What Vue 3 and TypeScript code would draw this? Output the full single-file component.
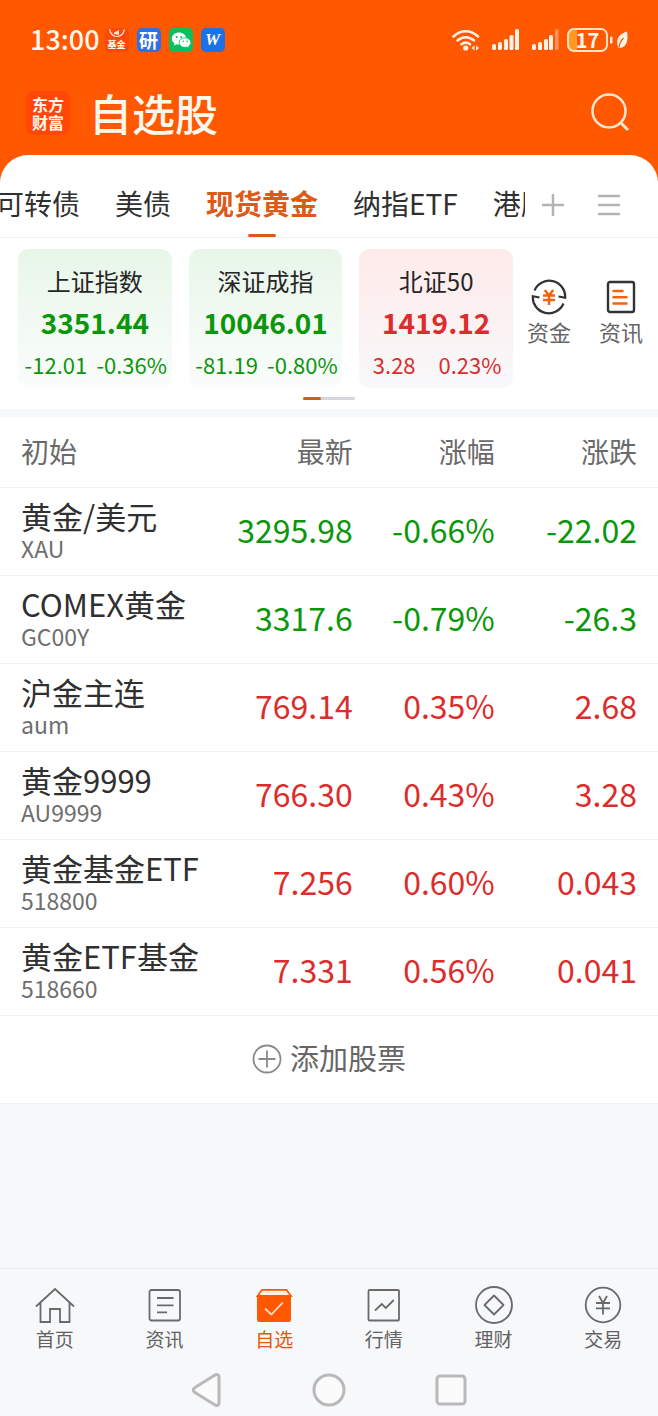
<script setup lang="ts">
import { ref } from 'vue'

type Trend = 'up' | 'down'

interface IndexCard {
  name: string
  value: string
  change: string
  percent: string
  trend: Trend
}

interface Quote {
  name: string
  code: string
  price: string
  percent: string
  change: string
  trend: Trend
}

const groups: string[] = ['可转债', '美债', '现货黄金', '纳指ETF', '港股']
const activeGroup = ref('现货黄金')

const indices: IndexCard[] = [
  { name: '上证指数', value: '3351.44', change: '-12.01', percent: '-0.36%', trend: 'down' },
  { name: '深证成指', value: '10046.01', change: '-81.19', percent: '-0.80%', trend: 'down' },
  { name: '北证50', value: '1419.12', change: '3.28', percent: '0.23%', trend: 'up' },
]

const quotes: Quote[] = [
  { name: '黄金/美元', code: 'XAU', price: '3295.98', percent: '-0.66%', change: '-22.02', trend: 'down' },
  { name: 'COMEX黄金', code: 'GC00Y', price: '3317.6', percent: '-0.79%', change: '-26.3', trend: 'down' },
  { name: '沪金主连', code: 'aum', price: '769.14', percent: '0.35%', change: '2.68', trend: 'up' },
  { name: '黄金9999', code: 'AU9999', price: '766.30', percent: '0.43%', change: '3.28', trend: 'up' },
  { name: '黄金基金ETF', code: '518800', price: '7.256', percent: '0.60%', change: '0.043', trend: 'up' },
  { name: '黄金ETF基金', code: '518660', price: '7.331', percent: '0.56%', change: '0.041', trend: 'up' },
]
</script>

<template>
  <div class="app">
    <header class="top">
      <div class="status">
        <span class="clock">13:00</span>
        <span class="mini fund">
          <svg viewBox="0 0 24 10" width="24" height="10" fill="none" stroke="#ffe3d3">
            <path d="M4.500 0c1 4.500 4 7.500 7.500 7.500S18.500 4.500 19.500 0" stroke-width="1.200" />
            <path d="M9 3.500l5-2.500v5l-5-1z" fill="#ffe3d3" stroke="none" />
          </svg>
          <span>基金</span>
        </span>
        <span class="mini research">研</span>
        <span class="mini wechat">
          <svg viewBox="0 0 24 24" width="24" height="24">
            <path d="M10 4.500C6 4.500 2.800 7.200 2.800 10.600c0 1.900 1 3.600 2.700 4.700L5 17.500l2.500-1.300c.8.200 1.600.3 2.500.3 4 0 7.200-2.500 7.200-5.900S14 4.500 10 4.500z" fill="#fff" />
            <path d="M16 9.800c-3.300 0-5.800 2.100-5.800 4.800s2.500 4.800 5.800 4.800c.7 0 1.400-.1 2-.3l2.200 1.100-.6-1.900c1.400-.9 2.200-2.200 2.200-3.700 0-2.700-2.500-4.800-5.800-4.800z" fill="#fff" stroke="#07c15f" stroke-width=".8" />
            <g fill="#07c15f"><circle cx="7.700" cy="9" r="1" /><circle cx="12.200" cy="9" r="1" /><circle cx="14.200" cy="13.200" r=".8" /><circle cx="18" cy="13.200" r=".8" /></g>
          </svg>
        </span>
        <span class="mini word">W</span>
        <span class="spacer"></span>
        <svg viewBox="0 0 28 24" width="28" height="24" fill="none" stroke="#fff1e6" stroke-width="2.500" stroke-linecap="round">
          <path d="M1.500 8.500c7-7 17.500-7 24.500 0M5.500 12.500c5-4.500 11.500-4.500 16.500 0M9.500 16.300c2.500-2 6-2 8.500 0" />
          <circle cx="13.700" cy="20" r="2.600" fill="#fff1e6" stroke="none" />
          <path d="M22.500 17.500v5L19.500 20zM24 17.500v5l3-2.500z" fill="#fff1e6" stroke="none" />
        </svg>
        <svg class="signal" viewBox="0 0 28 22" width="28" height="22" fill="#fff1e6">
          <rect x="0" y="15" width="4" height="6" rx="1.500" /><rect x="6" y="13" width="4" height="8" rx="1.500" /><rect x="12" y="10" width="4" height="11" rx="1.500" /><rect x="17.500" y="6" width="4" height="15" rx="1.500" /><rect x="23" y="0" width="4" height="21" rx="1.500" />
        </svg>
        <svg class="signal" viewBox="0 0 28 22" width="28" height="22" fill="#fff1e6">
          <rect x="0" y="15" width="4" height="6" rx="1.500" /><rect x="6" y="13" width="4" height="8" rx="1.500" /><rect x="12" y="10" width="4" height="11" rx="1.500" /><rect x="17" y="6" width="4" height="15" rx="1.500" /><rect x="23" y="0" width="3.500" height="21" rx="1.500" opacity=".4" />
        </svg>
        <span class="battery">17</span>
        <svg viewBox="0 0 18 18" width="18" height="18">
          <rect x="0" y="5.500" width="2.500" height="7" rx="1" fill="#fff1e6" />
          <path d="M17 .5C11 2.500 7 6 7.200 11.500c0 2 .6 3.500 1.300 5.500C15 17 19 12 17 .5z" fill="#fff1e6" />
          <path d="M9 16.500c.5-4 2-7 4.500-9.500" fill="none" stroke="#ff5800" stroke-width="1.200" />
        </svg>
      </div>
      <div class="title-bar">
        <span class="logo">东方<br />财富</span>
        <h1>自选股</h1>
        <button class="icon-btn" aria-label="搜索">
          <svg viewBox="0 0 40 40" width="40" height="40" fill="none" stroke="#ffe4d0" stroke-width="2.500">
            <circle cx="19" cy="18" r="16.500" /><path d="M31 30l7 7" stroke-width="3" />
          </svg>
        </button>
      </div>
    </header>

    <main class="sheet">
      <nav class="groups" aria-label="自选分组">
        <div class="group-list">
          <button
            v-for="g in groups"
            :key="g"
            class="group"
            :class="{ active: g === activeGroup }"
            @click="activeGroup = g"
          >{{ g }}</button>
        </div>
        <button class="icon-btn tool" aria-label="新增分组">
          <svg viewBox="0 0 24 24" width="24" height="24" stroke="#b4b4b4" stroke-width="2.500"><path d="M1 12h22M12 1v22" /></svg>
        </button>
        <button class="icon-btn tool" aria-label="管理分组">
          <svg viewBox="0 0 24 24" width="24" height="24" stroke="#b4b4b4" stroke-width="2.500" stroke-linecap="round"><path d="M2 3h20M2 12h20M2 21h20" /></svg>
        </button>
      </nav>

      <section class="overview">
        <div class="cards">
          <article v-for="i in indices" :key="i.name" class="card" :class="i.trend">
            <h2>{{ i.name }}</h2>
            <strong>{{ i.value }}</strong>
            <p><span>{{ i.change }}</span><span>{{ i.percent }}</span></p>
          </article>
          <button class="quick">
            <svg viewBox="0 0 36 36" width="36" height="36" fill="none" stroke="#333" stroke-width="2.200">
              <path d="M3.500 11.500A16 16 0 0 1 34.200 18.800L27.500 17.500M32.500 24.500A16 16 0 0 1 1.800 17.200L8.500 18.500" />
              <path d="M13.800 11l4.200 5.500 4.200-5.500M18 16v10M12 16.500h12M12 21h12" stroke="#f4620f" stroke-width="2.500" />
            </svg>
            资金
          </button>
          <button class="quick">
            <svg viewBox="0 0 36 36" width="36" height="36" fill="none" stroke="#333" stroke-width="2.400">
              <rect x="5" y="3" width="26" height="30" rx="2" />
              <path d="M10.500 12h9M10.500 18.200h13M10.500 24.500h13" stroke="#f4620f" stroke-width="2.500" stroke-linecap="round" />
            </svg>
            资讯
          </button>
        </div>
        <div class="pager"><span></span></div>
      </section>

      <table class="quotes">
        <thead>
          <tr><th class="name">初始</th><th>最新</th><th>涨幅</th><th class="last">涨跌</th></tr>
        </thead>
        <tbody>
          <tr v-for="q in quotes" :key="q.code" :class="q.trend">
            <td class="name"><b>{{ q.name }}</b><small>{{ q.code }}</small></td>
            <td>{{ q.price }}</td>
            <td>{{ q.percent }}</td>
            <td class="last">{{ q.change }}</td>
          </tr>
        </tbody>
      </table>

      <button class="add">
        <svg viewBox="0 0 30 30" width="30" height="30" fill="none" stroke="#8a8a8a" stroke-width="1.800">
          <circle cx="15" cy="15" r="13.500" /><path d="M6.500 15h17M15 6.500v17" />
        </svg>
        <span>添加股票</span>
      </button>
    </main>

    <footer class="bottom">
      <nav class="tabs" aria-label="主导航">
        <a href="#home">
          <svg class="ico" viewBox="0 0 40 40"><path d="M1 21.500L20 4l19 17.500M5.500 17.500V37h9.500V24h10v13h9.500V17.500" /></svg>首页
        </a>
        <a href="#news">
          <svg class="ico" viewBox="0 0 40 40"><rect x="4.500" y="5" width="30.500" height="30.500" rx="2" /><path d="M12 13h16.500M12 20.300h16.500M12 27.300h10" /></svg>资讯
        </a>
        <a href="#watch" class="current" aria-current="page">
          <svg class="ico" viewBox="0 0 40 40">
            <path d="M3.500 11L8 4.800h24.500L37 11z" fill="#fff0e4" stroke="#ff5800" />
            <path d="M3 10.500h34V34.500a2.500 2.500 0 0 1-2.500 2.500h-29A2.500 2.500 0 0 1 3 34.500z" fill="#ff5800" stroke="none" />
            <path d="M11 23.500l6.300 6L28.800 17.500" stroke="#ffe2cc" />
          </svg>自选
        </a>
        <a href="#market">
          <svg class="ico" viewBox="0 0 40 40"><rect x="4.500" y="5" width="30.500" height="30.500" rx="1" /><path d="M11 25.500l6.800-6.500 4 4 8-8" /></svg>行情
        </a>
        <a href="#wealth">
          <svg class="ico" viewBox="0 0 40 40"><circle cx="20" cy="20" r="18" /><path d="M20 10.500l9.500 9.500-9.500 9.500-9.500-9.500z" stroke-linejoin="round" /></svg>理财
        </a>
        <a href="#trade">
          <svg class="ico" viewBox="0 0 40 40"><circle cx="20" cy="20" r="17.300" /><path d="M16 11l4 7 4-7M20 18v11.500M13 18h14M13 23.300h14" /></svg>交易
        </a>
      </nav>
      <div class="system">
        <button class="icon-btn" aria-label="返回">
          <svg viewBox="0 0 36 36" width="36" height="36"><path d="M26 3L6 15.500q-3.500 2.500 0 5L26 33q4 1.500 4-2V5q0-3.500-4-2z" /></svg>
        </button>
        <button class="icon-btn" aria-label="主屏幕">
          <svg viewBox="0 0 36 36" width="36" height="36"><circle cx="18" cy="18" r="15" /></svg>
        </button>
        <button class="icon-btn" aria-label="最近任务">
          <svg viewBox="0 0 36 36" width="36" height="36"><rect x="4" y="4" width="28" height="28" rx="3" /></svg>
        </button>
      </div>
    </footer>
  </div>
</template>

<style>
body {
  margin: 0;
  background: #f7f8fa;
}
</style>

<style scoped>
.app {
  --orange: #ff5800;
  --accent: #dc5a14;
  --up: #dc2c2c;
  --down: #0c960c;
  display: flex;
  flex-direction: column;
  min-height: 100vh;
  background: #f7f8fa;
  color: #303030;
  font-family: 'Noto Sans CJK SC', sans-serif;
}
button {
  margin: 0;
  padding: 0;
  border: 0;
  background: none;
  color: inherit;
  font: inherit;
}
.icon-btn {
  display: flex;
  align-items: center;
  justify-content: center;
}
h1, h2, p {
  margin: 0;
  font-weight: 400;
}

.top {
  padding: 20px 28px 48px 26px;
  background: var(--orange);
  color: #fff6ee;
}
.status {
  display: flex;
  align-items: center;
  height: 40px;
  padding: 0 2px 0 4px;
}
.clock {
  margin-right: 5px;
  padding-bottom: 2px;
  font-size: 27px;
  font-weight: 500;
  line-height: 36px;
}
.mini {
  display: flex;
  align-items: center;
  justify-content: center;
  width: 24px;
  height: 24px;
  margin-right: 8px;
  border-radius: 5px;
  font-weight: 700;
  color: #fff;
}
.fund {
  flex-direction: column;
  background: #ff4708;
  font-size: 9px;
  line-height: 12px;
}
.research {
  background: #2f6fe4;
  font-size: 19px;
  line-height: 24px;
}
.wechat {
  background: #07c15f;
}
.word {
  background: #1a72e4;
  font-family: 'Liberation Serif', serif;
  font-style: italic;
  font-size: 17px;
}
.spacer {
  flex: 1;
}
.signal {
  margin-left: 12px;
}
.battery {
  box-sizing: border-box;
  width: 41px;
  height: 24px;
  margin: 0 2px 0 7px;
  border: 2px solid #ffe0c0;
  border-radius: 7px;
  background: linear-gradient(90deg, #ff9a20 8px, transparent 8px);
  font-size: 20px;
  font-weight: 700;
  line-height: 20px;
  text-align: center;
}
.title-bar {
  display: flex;
  align-items: center;
  height: 45px;
  margin-top: 30px;
}
.logo {
  width: 44px;
  padding: 4px 0;
  border-radius: 8px;
  background: #ff4708;
  font-size: 16px;
  font-weight: 700;
  line-height: 18px;
  text-align: center;
}
h1 {
  flex: 1;
  margin-left: 19px;
  padding-bottom: 2px;
  font-size: 43px;
  font-weight: 500;
  line-height: 44px;
}

.sheet {
  flex: 1;
  margin-top: -28px;
  border-radius: 28px 28px 0 0;
}
.groups {
  display: flex;
  align-items: center;
  height: 68px;
  padding: 14px 21px 0 0;
  border-bottom: 1px solid #f0f1f3;
  border-radius: 28px 28px 0 0;
  background: #fff;
}
.group-list {
  display: flex;
  flex: 1;
  gap: 35px;
  min-width: 0;
  height: 68px;
  margin-left: -4px;
  overflow: hidden;
}
.group {
  position: relative;
  flex: none;
  font-size: 28px;
  line-height: 66px;
}
.group.active {
  color: var(--accent);
  font-weight: 700;
}
.group.active::after {
  content: '';
  position: absolute;
  bottom: 0;
  left: 50%;
  width: 28px;
  height: 3px;
  margin-left: -14px;
  border-radius: 2px;
  background: var(--accent);
}
.tool {
  width: 56px;
  padding-top: 4px;
}

.overview {
  padding: 11px 0 9px;
  border-bottom: 8px solid #f7f8fa;
  background: #fff;
}
.cards {
  display: flex;
  padding: 0 1px 0 18px;
}
.card {
  flex: 1;
  min-width: 0;
  margin-right: 17px;
  padding: 12px 0 3px;
  border-radius: 11px;
  text-align: center;
}
.card:nth-child(3) {
  margin-right: 0;
}
.card.down {
  background: linear-gradient(#e8f6e9, #fafdfb);
  color: var(--down);
}
.card.up {
  background: linear-gradient(#ffeaea, #f8f8fa);
  color: var(--up);
}
.card h2 {
  color: #262626;
  font-size: 24px;
  line-height: 40px;
}
.card strong {
  display: block;
  font-size: 28px;
  line-height: 42px;
}
.card p {
  display: flex;
  justify-content: space-around;
  padding-left: 2px;
  font-size: 22px;
  line-height: 42px;
}
.quick {
  display: flex;
  flex-direction: column;
  align-items: center;
  width: 72px;
  padding-top: 30px;
  color: #666;
  font-size: 22px;
  line-height: 32px;
}
.pager {
  width: 52px;
  height: 3px;
  margin: 9px auto 0;
  border-radius: 2px;
  background: #d4d6da;
}
.pager span {
  display: block;
  width: 18px;
  height: 3px;
  border-radius: 2px;
  background: var(--accent);
}

.quotes {
  width: 100%;
  border-collapse: collapse;
  table-layout: fixed;
  background: #fff;
}
.quotes tr {
  border-bottom: 1px solid #f0f1f3;
}
.quotes th,
.quotes td {
  box-sizing: border-box;
  padding: 0;
  text-align: right;
}
.quotes th {
  width: 21.6%;
  height: 70px;
  padding-bottom: 2px;
  color: #6a6a6a;
  font-size: 28px;
  font-weight: 400;
  line-height: 66px;
}
.quotes td {
  height: 88px;
  padding-bottom: 4px;
  font-size: 32px;
  line-height: 40px;
}
.quotes .name {
  width: auto;
  padding-left: 21px;
  text-align: left;
}
.quotes td.name {
  padding-bottom: 2px;
}
.quotes .last {
  padding-right: 21px;
}
.quotes th.last {
  width: 24.8%;
}
.up td {
  color: var(--up);
}
.down td {
  color: var(--down);
}
.name b,
.name small {
  display: block;
  font-weight: 400;
  white-space: nowrap;
}
.name b {
  color: #303030;
  font-size: 31px;
  line-height: 36px;
}
.name small {
  color: #6e6e6e;
  font-size: 23px;
  line-height: 28px;
}
.add {
  display: flex;
  align-items: center;
  justify-content: center;
  gap: 8px;
  width: 100%;
  height: 88px;
  border-bottom: 1px solid #f0f1f3;
  background: #fff;
  color: #666;
  font-size: 29px;
}
.add span {
  padding-bottom: 4px;
}

.bottom {
  border-top: 1px solid #e9ebee;
  background: #f7f8fa;
}
.tabs {
  display: flex;
  padding: 16px 0 11px;
}
.tabs a {
  display: flex;
  flex: 1;
  flex-direction: column;
  align-items: center;
  color: #626262;
  font-size: 19px;
  line-height: 28px;
  text-decoration: none;
}
.tabs .current {
  color: var(--accent);
}
.ico {
  width: 40px;
  height: 40px;
  fill: none;
  stroke: #6a6a6a;
  stroke-width: 1.8px;
}
.system {
  display: flex;
  justify-content: center;
  gap: 86px;
  height: 52px;
}
.system svg {
  fill: #fbfbfc;
  stroke: #b9b9bb;
  stroke-width: 3px;
}
</style>
